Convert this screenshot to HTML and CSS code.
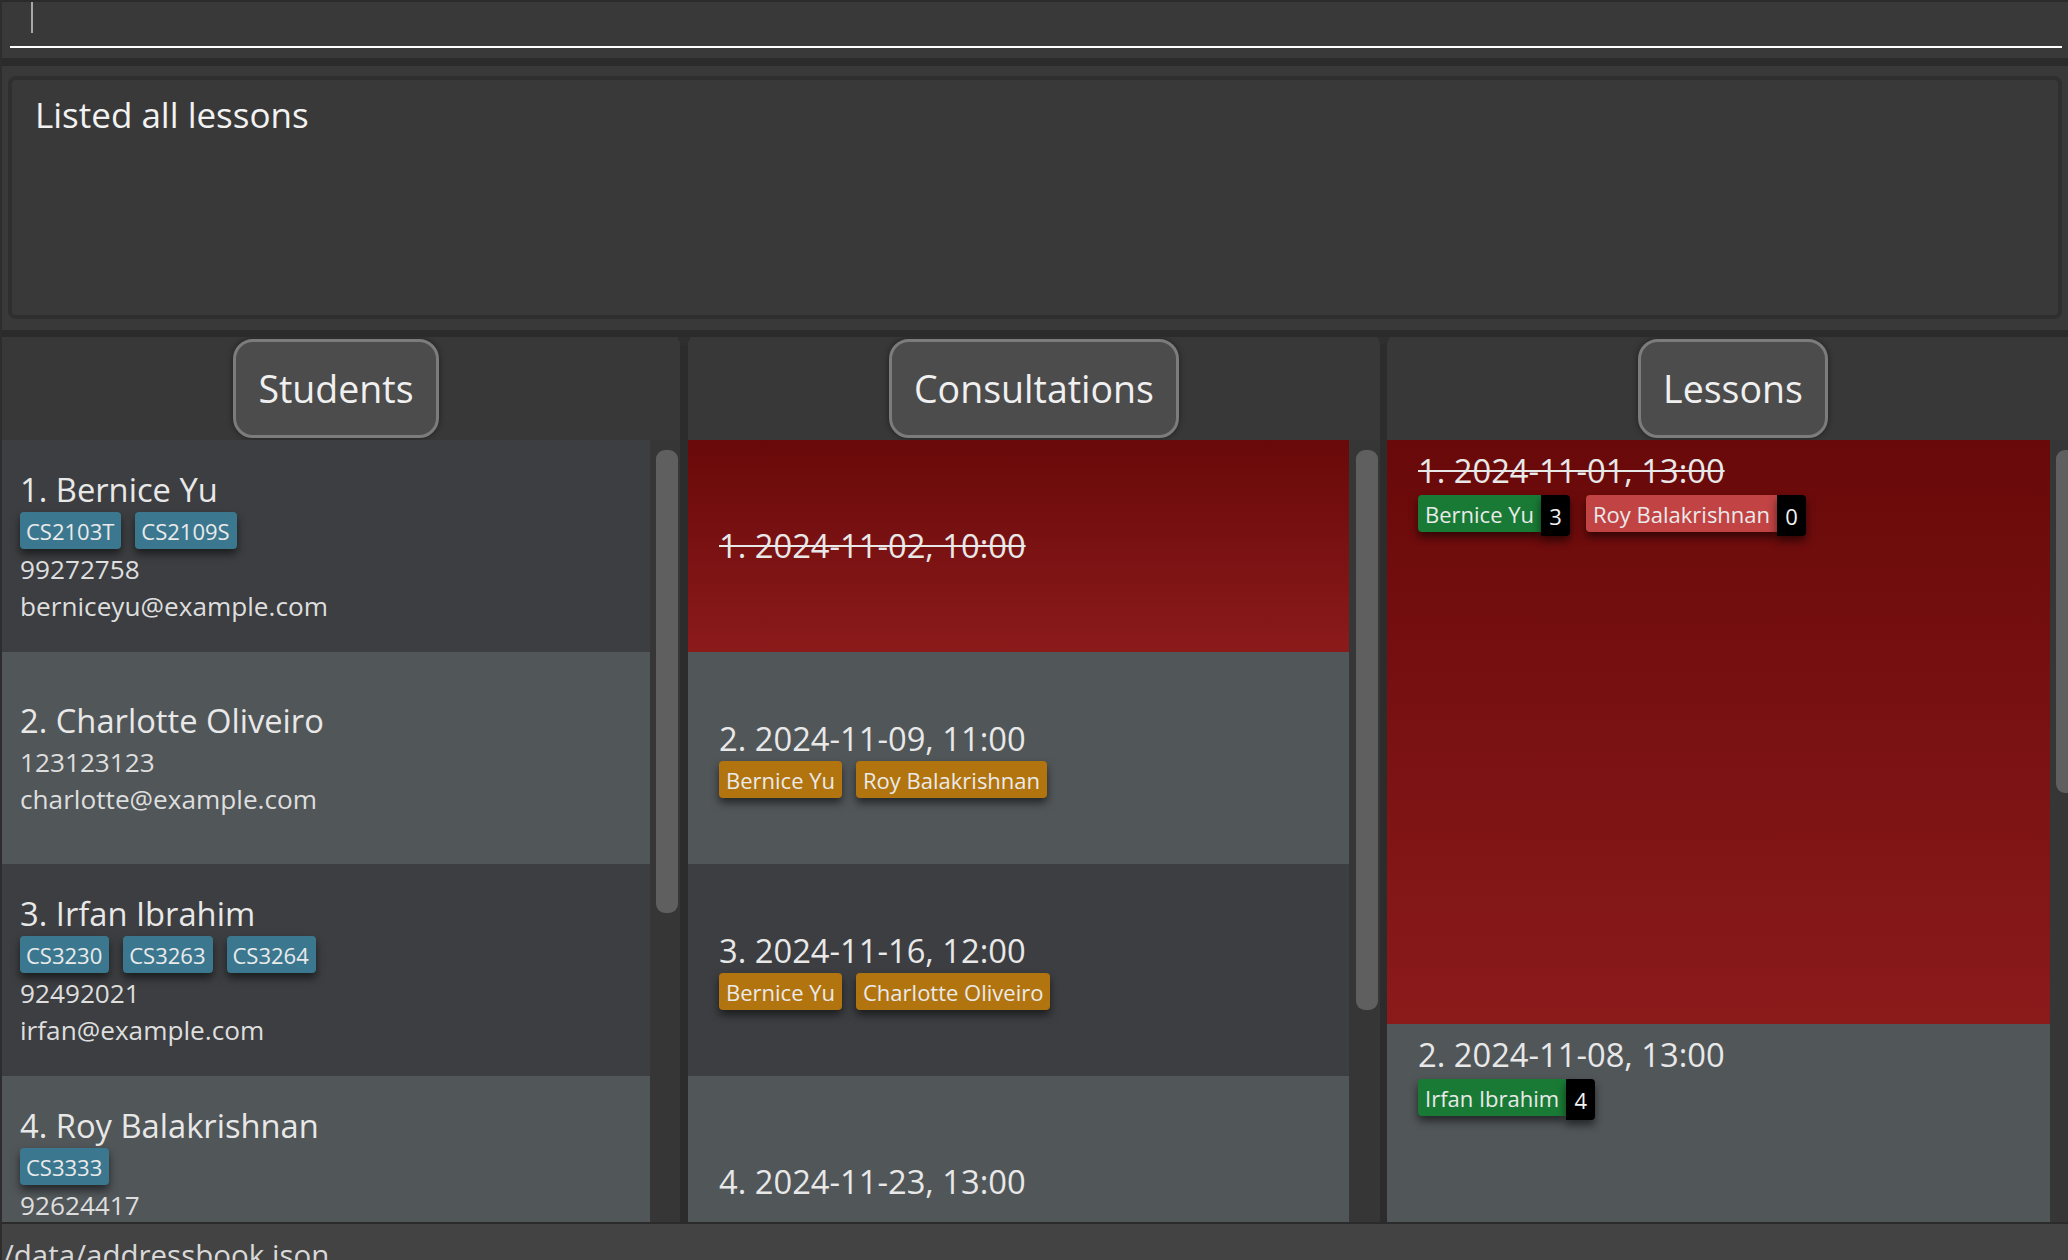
FILE: index.html
```html
<!DOCTYPE html>
<html>
<head>
<meta charset="utf-8">
<link rel="stylesheet" href="styles.css">
</head>
<body>
<div class="window">
  <div class="command">
    <div class="command-field"><span class="caret"></span></div>
  </div>
  <div class="band"></div>
  <div class="result-area">
    <div class="result-box">Listed all lessons</div>
  </div>
  <div class="band band-thin"></div>
  <div class="panels">
    <section class="column col-students">
      <div class="col-head"><div class="pill">Students</div></div>
      <div class="col-body">
        <div class="cards">
          <div class="card dark student">
            <div class="title">1. Bernice Yu</div>
            <div class="tags"><span class="tag blue">CS2103T</span><span class="tag blue">CS2109S</span></div>
            <div class="detail">99272758</div>
            <div class="detail">berniceyu@example.com</div>
          </div>
          <div class="card light student">
            <div class="title">2. Charlotte Oliveiro</div>
            <div class="detail">123123123</div>
            <div class="detail">charlotte@example.com</div>
          </div>
          <div class="card dark student">
            <div class="title">3. Irfan Ibrahim</div>
            <div class="tags"><span class="tag blue">CS3230</span><span class="tag blue">CS3263</span><span class="tag blue">CS3264</span></div>
            <div class="detail">92492021</div>
            <div class="detail">irfan@example.com</div>
          </div>
          <div class="card light student">
            <div class="title">4. Roy Balakrishnan</div>
            <div class="tags"><span class="tag blue">CS3333</span></div>
            <div class="detail">92624417</div>
            <div class="detail-spacer"></div>
          </div>
        </div>
        <div class="track"><div class="thumb thumb-students"></div></div>
      </div>
    </section>
    <div class="divider"><span class="knob"></span></div>
    <section class="column col-consults">
      <div class="col-head"><div class="pill">Consultations</div></div>
      <div class="col-body">
        <div class="cards">
          <div class="card past event">
            <div class="title strike">1. 2024-11-02, 10:00</div>
          </div>
          <div class="card light event">
            <div class="title">2. 2024-11-09, 11:00</div>
            <div class="tags"><span class="tag gold">Bernice Yu</span><span class="tag gold">Roy Balakrishnan</span></div>
          </div>
          <div class="card dark event">
            <div class="title">3. 2024-11-16, 12:00</div>
            <div class="tags"><span class="tag gold">Bernice Yu</span><span class="tag gold">Charlotte Oliveiro</span></div>
          </div>
          <div class="card light event">
            <div class="title">4. 2024-11-23, 13:00</div>
          </div>
        </div>
        <div class="track track-wide"><div class="thumb thumb-consults"></div></div>
      </div>
    </section>
    <div class="divider divider-narrow"><span class="knob"></span></div>
    <section class="column col-lessons">
      <div class="col-head"><div class="pill">Lessons</div></div>
      <div class="col-body">
        <div class="cards">
          <div class="card past lesson lesson-tall">
            <div class="title strike">1. 2024-11-01, 13:00</div>
            <div class="tags">
              <span class="att"><span class="tag green">Bernice Yu</span><span class="count">3</span></span>
              <span class="att"><span class="tag red">Roy Balakrishnan</span><span class="count">0</span></span>
            </div>
          </div>
          <div class="card light lesson">
            <div class="title">2. 2024-11-08, 13:00</div>
            <div class="tags">
              <span class="att"><span class="tag green">Irfan Ibrahim</span><span class="count">4</span></span>
            </div>
          </div>
        </div>
        <div class="track track-lessons"><div class="thumb thumb-lessons"></div></div>
      </div>
    </section>
  </div>
  <div class="status">/data/addressbook.json</div>
</div>
</body>
</html>
```

FILE: styles.css
```css
* { box-sizing: border-box; }

html, body {
  margin: 0;
  padding: 0;
  background: #383838;
}

body {
  width: 2068px;
  height: 1260px;
  overflow: hidden;
  font-family: "Open Sans", "Noto Sans", sans-serif;
  color: #e6e6e6;
}

.window {
  display: flex;
  flex-direction: column;
  height: 1260px;
  border-left: 2px solid #2d2d2d;
}

/* command box */
.command {
  flex: none;
  height: 58px;
  border-top: 2px solid #2b2b2b;
  padding: 0 6px 0 8px;
  background: #393939;
}

.command-field {
  height: 46px;
  border-bottom: 2px solid #ffffff;
  padding-left: 21px;
}

.caret {
  display: block;
  width: 2px;
  height: 31px;
  background: #a8a8a8;
}

.band {
  flex: none;
  height: 8px;
  background: #2b2b2b;
}

.band-thin {
  height: 7px;
}

/* result display */
.result-area {
  flex: none;
  height: 264px;
  padding: 10px 6px 11px 6px;
  background: #393939;
}

.result-box {
  height: 100%;
  border: 4px solid #2f2f2f;
  border-radius: 8px;
  padding: 12px 0 0 23px;
  font-size: 35px;
  line-height: 46px;
  color: #f2f2f2;
}

/* panels */
.panels {
  flex: none;
  display: flex;
  height: 885px;
  overflow: hidden;
}

.column {
  flex: none;
  display: flex;
  flex-direction: column;
  background: #383838;
  overflow: hidden;
}

.col-students { width: 678px; }
.col-consults { width: 692px; }
.col-lessons { width: 692px; }

.col-students .col-head { padding-right: 10px; }

.divider {
  flex: none;
  width: 8px;
  background: #2c2c2c;
  position: relative;
}

.divider-narrow { width: 7px; }

.knob {
  position: absolute;
  top: 0;
  left: -3px;
  right: -3px;
  height: 8px;
  background: #2f2f2f;
  clip-path: polygon(0 0, 100% 0, 70% 100%, 30% 100%);
}

.col-head {
  height: 103px;
  display: flex;
  justify-content: center;
  padding-top: 2px;
}

.pill {
  height: 99px;
  padding: 0 22px;
  display: flex;
  align-items: center;
  background: #4c4c4c;
  border: 3px solid #7c7c7c;
  border-radius: 20px;
  box-shadow: 0 0 6px rgba(0, 0, 0, 0.45);
  font-size: 37.5px;
  color: #f0f0f0;
}

.col-body {
  display: flex;
  height: 782px;
  overflow: hidden;
}

.cards {
  flex: 1;
  display: flex;
  flex-direction: column;
  overflow: hidden;
}

.track {
  width: 30px;
  flex: none;
  padding: 10px 2px 0 6px;
  background: #363636;
}

.track-wide {
  width: 31px;
  padding-left: 7px;
}

.track-lessons {
  width: 29px;
  padding-right: 1px;
}

.thumb {
  width: 22px;
  background: #5f5f5f;
  border-radius: 9px;
}

.thumb-students { height: 463px; }
.thumb-consults { height: 560px; }
.thumb-lessons { height: 343px; }

/* cards */
.card {
  flex: none;
  height: 212px;
  display: flex;
  flex-direction: column;
  justify-content: center;
}

.card.dark { background: #3c3e41; }
.card.light { background: #515659; }
.card.past { background: linear-gradient(#690909, #8b1a1b); }

.student { padding-left: 18px; }
.event { padding-left: 31px; }

.lesson {
  padding-left: 31px;
  padding-top: 8px;
  justify-content: flex-start;
  height: 240px;
}

.lesson-tall { height: 584px; }

.title {
  font-size: 32.7px;
  line-height: 46px;
  color: #e8e8e8;
  white-space: nowrap;
}

.strike {
  text-decoration: line-through;
  text-decoration-thickness: 2px;
}

.detail {
  font-size: 26.2px;
  line-height: 37px;
  color: #dedede;
  white-space: nowrap;
}

.detail-spacer {
  height: 37px;
}

.tags {
  display: flex;
  gap: 14px;
  margin-top: -1px;
  height: 39px;
}

.tag {
  display: flex;
  align-items: center;
  height: 37px;
  padding: 0 7px 0 6px;
  border-radius: 4px;
  font-size: 22px;
  color: #eaeaea;
  white-space: nowrap;
  box-shadow: 0 5px 8px rgba(0, 0, 0, 0.55);
}

.event .tag { padding: 0 7px; }

.tag.blue { background: #3b7890; }
.tag.gold { background: #b2740e; }
.tag.green { background: #197a35; border-radius: 4px 0 0 4px; padding: 0 7px; }
.tag.red { background: #c24344; border-radius: 4px 0 0 4px; padding: 0 7px; }

.lesson .tags { gap: 16px; height: 42px; margin-top: 1px; }

.att {
  display: flex;
  align-items: flex-start;
}

.count {
  display: flex;
  align-items: center;
  justify-content: center;
  width: 29px;
  height: 41px;
  background: #000;
  border-radius: 0 4px 4px 0;
  font-size: 22px;
  color: #f2f2f2;
  box-shadow: 0 5px 8px rgba(0, 0, 0, 0.55);
}

/* status bar */
.status {
  flex: none;
  height: 38px;
  border-top: 2px solid #2b2b2b;
  background: #434343;
  font-size: 29.5px;
  line-height: 50px;
  padding: 6px 0 0 1px;
  color: #d8d8d8;
  white-space: nowrap;
  overflow: hidden;
}
```
